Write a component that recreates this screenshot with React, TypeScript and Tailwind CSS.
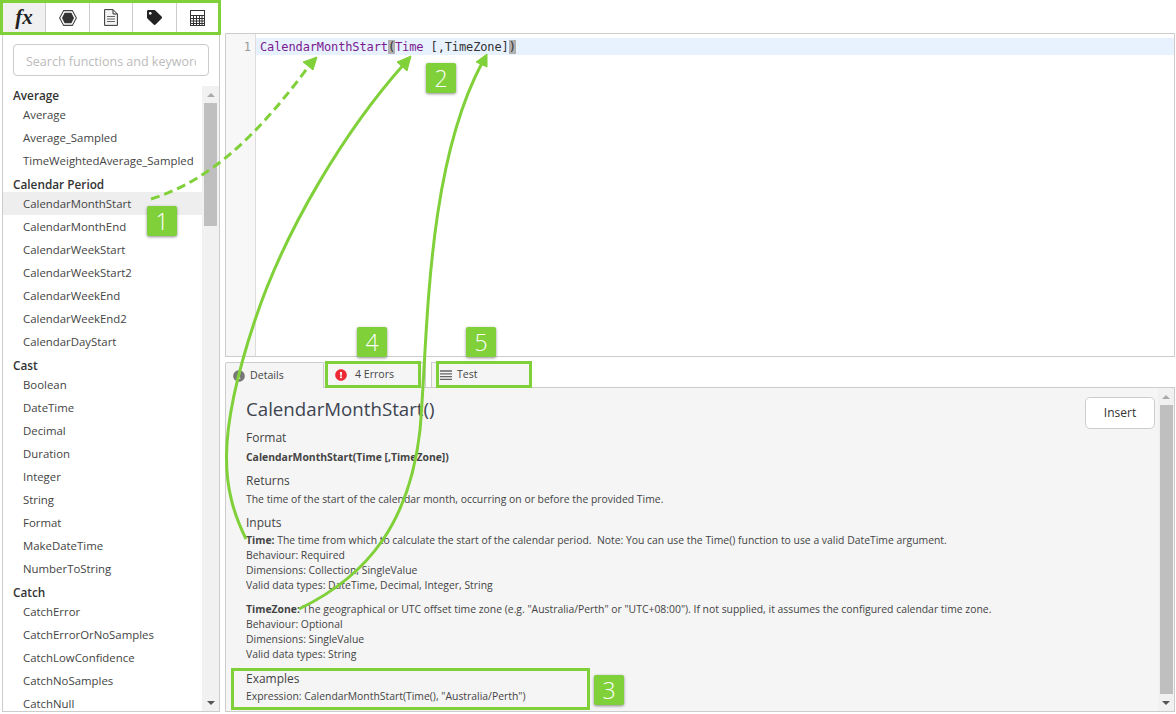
import { FaTag, FaInfoCircle, FaExclamationCircle } from 'react-icons/fa'

const groups = [
  { name: 'Average', items: ['Average', 'Average_Sampled', 'TimeWeightedAverage_Sampled'] },
  {
    name: 'Calendar Period',
    items: [
      'CalendarMonthStart',
      'CalendarMonthEnd',
      'CalendarWeekStart',
      'CalendarWeekStart2',
      'CalendarWeekEnd',
      'CalendarWeekEnd2',
      'CalendarDayStart',
    ],
  },
  {
    name: 'Cast',
    items: ['Boolean', 'DateTime', 'Decimal', 'Duration', 'Integer', 'String', 'Format', 'MakeDateTime', 'NumberToString'],
  },
  {
    name: 'Catch',
    items: ['CatchError', 'CatchErrorOrNoSamples', 'CatchLowConfidence', 'CatchNoSamples', 'CatchNull'],
  },
]

function Badge({ n, className }: { n: number; className: string }) {
  return (
    <div
      className={`absolute w-[30px] h-[30px] bg-[#80d03a] rounded-[2px] shadow-[0_1px_3px_rgba(0,0,0,0.45)] text-white text-[23px] font-light leading-[30px] text-center ${className}`}
    >
      {n}
    </div>
  )
}

function Toolbar() {
  return (
    <div className="h-[35px] border-[3px] border-[#80d03a] flex bg-white text-[#333]">
      <div className="w-[43px] bg-[#f0f0f0] border-r border-[#ccc] flex items-center justify-center font-['Liberation_Serif',serif] italic font-bold text-[21px] text-[#222]">
        fx
      </div>
      <div className="w-[44px] border-r border-[#ccc] flex items-center justify-center">
        <svg width="18" height="16" viewBox="0 0 18 16">
          <path d="M4.7 0.6h8.6L17.4 8l-4.1 7.4H4.7L0.6 8z" fill="#fff" stroke="#444" strokeWidth="1.1" />
          <path d="M5.6 2.8h6.8L15 8l-2.6 5.2H5.6L3 8z" fill="#333" />
        </svg>
      </div>
      <div className="w-[43px] border-r border-[#ccc] flex items-center justify-center">
        <svg width="14" height="17" viewBox="0 0 14 17" fill="none" stroke="#333">
          <path d="M0.6 0.6h8.4l4.4 4.4v11.4H0.6z" fill="#f3f3f3" />
          <path d="M9 0.6v4.4h4.4" />
          <path d="M3 7.5h8M3 10h8M3 12.5h8" stroke="#666" />
        </svg>
      </div>
      <div className="w-[44px] border-r border-[#ccc] flex items-center justify-center">
        <FaTag className="w-[15px] h-[15px] text-[#222]" />
      </div>
      <div className="flex-1 flex items-center justify-center">
        <svg width="15" height="16" viewBox="0 0 15 16">
          <rect x="0.5" y="0.5" width="14" height="15" fill="none" stroke="#333" />
          <path d="M0 5.5h15M0 8.5h15M0 11h15M0 13.5h15M3.5 5v11M6.5 5v11M9.5 5v11M12 5v11" stroke="#333" strokeWidth="1" />
        </svg>
      </div>
    </div>
  )
}

function Sidebar() {
  return (
    <div className="flex-1 min-h-0 ml-[2px] mr-px mb-[2px] border-x border-b border-[#ccc] flex flex-col">
      <div className="h-[48px] pt-[9px] pl-[10px] pr-[10px]">
        <div className="h-[32px] border border-[#ccc] rounded-[4px] pl-[12px] pr-[12px] text-[12.5px] leading-[33px] text-[#bbb]">
          <div className="overflow-hidden whitespace-nowrap">Search functions and keyword</div>
        </div>
      </div>
      <div className="flex-1 min-h-0 flex">
        <div className="flex-1 overflow-hidden">
          {groups.map((g) => (
            <div key={g.name}>
              <div className="h-[20px] pt-[2px] pl-[10px] text-[11.8px] leading-[20px] font-semibold text-[#333]">{g.name}</div>
              {g.items.map((item) => (
                <div
                  key={item}
                  className={`h-[23px] pl-[20px] text-[11.4px] leading-[23px] text-[#444] whitespace-nowrap ${
                    item === 'CalendarMonthStart' ? 'bg-[#eeeeee]' : ''
                  }`}
                >
                  {item}
                </div>
              ))}
            </div>
          ))}
        </div>
        <div className="w-[17px] mt-[3px] bg-[#f1f1f1] flex flex-col items-center">
          <div className="h-[17px] flex items-center justify-center">
            <div className="w-0 h-0 border-x-[4px] border-x-transparent border-b-[4px] border-b-[#aaa]" />
          </div>
          <div className="w-[13px] h-[123px] bg-[#bfbfbf]" />
          <div className="flex-1" />
          <div className="h-[17px] flex items-center justify-center">
            <div className="w-0 h-0 border-x-[4px] border-x-transparent border-t-[4px] border-t-[#555]" />
          </div>
        </div>
      </div>
    </div>
  )
}

function Editor() {
  return (
    <div className="h-[324px] border border-[#ccc] flex font-['DejaVu_Sans_Mono',monospace] text-[12px] leading-[19px]">
      <div className="w-[30px] bg-[#f7f7f7] border-r border-[#ddd] pt-[4px] pr-[4px] text-right text-[#999]">1</div>
      <div className="flex-1 pt-[4px]">
        <div className="h-[17px] bg-[#e8f2ff] pl-[4px] text-[#333] tracking-[-0.12px] whitespace-pre">
          <span className="text-[#7a1b8e]">CalendarMonthStart</span>
          <span className="bg-[#b0b0b0]">(</span>
          <span className="text-[#7a1b8e]">Time</span> [,TimeZone]
          <span className="bg-[#b0b0b0]">)</span>
        </div>
      </div>
    </div>
  )
}

function Tabs() {
  return (
    <div className="h-[26px] mt-[5px] flex items-stretch border-b border-[#ccc] text-[10.6px] text-[#444]">
      <div className="w-[99px] h-[26px] bg-[#f5f5f5] border-x border-t border-[#ccc] rounded-t-[2px] flex items-center pl-[7px] gap-[5px]">
        <FaInfoCircle className="w-[12px] h-[12px] text-[#777]" />
        Details
      </div>
      <div className="w-[102px] flex items-center pl-[11px] gap-[8px] border-r border-t border-[#ccc] bg-[#f5f5f5]">
        <FaExclamationCircle className="w-[12px] h-[12px] text-[#ee2a35]" />
        4 Errors
      </div>
      <div className="w-[100px] ml-[5px] flex items-center pl-[8px] gap-[5px] border-l border-t border-[#ccc] bg-[#f5f5f5]">
        <svg width="12" height="11" viewBox="0 0 12 11" stroke="#666" strokeWidth="1.3">
          <path d="M0 1h12M0 3.8h12M0 6.6h12M0 9.4h12" />
        </svg>
        Test
      </div>
    </div>
  )
}

function Details() {
  return (
    <div className="flex-1 min-h-0 mb-[2px] border-x border-b border-[#ccc] bg-[#f5f5f5] flex relative text-[10.4px] leading-[15px] text-[#444]">
      <div className="flex-1 pl-[20px] pt-[8px] whitespace-nowrap">
        <div className="text-[18.7px] leading-[26px] text-[#3d4450]">CalendarMonthStart()</div>
        <div className="mt-[7px] text-[12px] leading-[18px]">Format</div>
        <div className="mt-[3px] font-bold">CalendarMonthStart(Time [,TimeZone])</div>
        <div className="mt-[7px] text-[12px] leading-[18px]">Returns</div>
        <div className="mt-[2px]">The time of the start of the calendar month, occurring on or before the provided Time.</div>
        <div className="mt-[7px] text-[12px] leading-[18px]">Inputs</div>
        <div className="mt-[1px]">
          <span className="font-bold">Time:</span> The time from which to calculate the start of the calendar period.&nbsp; Note: You can use the Time() function to use a valid DateTime argument.
        </div>
        <div>Behaviour: Required</div>
        <div>Dimensions: Collection, SingleValue</div>
        <div>Valid data types: DateTime, Decimal, Integer, String</div>
        <div className="mt-[9px]">
          <span className="font-bold">TimeZone:</span> The geographical or UTC offset time zone (e.g. "Australia/Perth" or "UTC+08:00"). If not supplied, it assumes the configured calendar time zone.
        </div>
        <div>Behaviour: Optional</div>
        <div>Dimensions: SingleValue</div>
        <div>Valid data types: String</div>
        <div className="mt-[8px] text-[12px] leading-[18px]">Examples</div>
        <div className="mt-[1px]">Expression: CalendarMonthStart(Time(), "Australia/Perth")</div>
      </div>
      <div className="pt-[9px] pr-[3px]">
        <div className="w-[70px] h-[32px] bg-white border border-[#ccc] rounded-[5px] text-[12px] leading-[30px] text-center text-[#333]">
          Insert
        </div>
      </div>
      <div className="w-[16px] flex flex-col items-center bg-[#f1f1f1]">
        <div className="h-[17px] flex items-center justify-center">
          <div className="w-0 h-0 border-x-[4px] border-x-transparent border-b-[4px] border-b-[#aaa]" />
        </div>
        <div className="w-[13px] flex-1 bg-[#bfbfbf]" />
        <div className="h-[17px] flex items-center justify-center">
          <div className="w-0 h-0 border-x-[4px] border-x-transparent border-t-[4px] border-t-[#555]" />
        </div>
      </div>
    </div>
  )
}

export default function App() {
  return (
    <div className="relative w-[1176px] h-[714px] overflow-hidden bg-white flex font-['Open_Sans',sans-serif]">
      <div className="w-[221px] flex flex-col">
        <Toolbar />
        <Sidebar />
      </div>
      <div className="flex-1 ml-[4px] mr-px pt-[33px] flex flex-col">
        <Editor />
        <Tabs />
        <Details />
      </div>

      {/* annotations */}
      <svg className="absolute left-0 top-0 pointer-events-none" width="1176" height="714" fill="none" stroke="#80d03a">
        <path d="M151 199C220 178 270 118 309 66" strokeWidth="3" strokeDasharray="9 5" />
        <path d="M317 57L303 62L313 70z" fill="#80d03a" strokeWidth="1" />
        <path d="M246 539C222 490 215 440 255 320C285 230 345 130 405 63" strokeWidth="3" />
        <path d="M411 56L397 62L407 71z" fill="#80d03a" strokeWidth="1" />
        <path d="M299 609C370 575 410 520 420 430C428 340 425 170 482 63" strokeWidth="3" />
        <path d="M487 54L476 62L487 67z" fill="#80d03a" strokeWidth="1" />
      </svg>
      <div className="absolute left-[325px] top-[361px] w-[96px] h-[27px] border-[3px] border-[#80d03a]" />
      <div className="absolute left-[436px] top-[361px] w-[96px] h-[27px] border-[3px] border-[#80d03a]" />
      <div className="absolute left-[231px] top-[668px] w-[359px] h-[42px] border-[3px] border-[#80d03a]" />
      <Badge n={1} className="left-[147px] top-[206px]" />
      <Badge n={2} className="left-[426px] top-[63px]" />
      <Badge n={3} className="left-[594px] top-[675px]" />
      <Badge n={4} className="left-[357px] top-[327px]" />
      <Badge n={5} className="left-[466px] top-[327px]" />
    </div>
  )
}
